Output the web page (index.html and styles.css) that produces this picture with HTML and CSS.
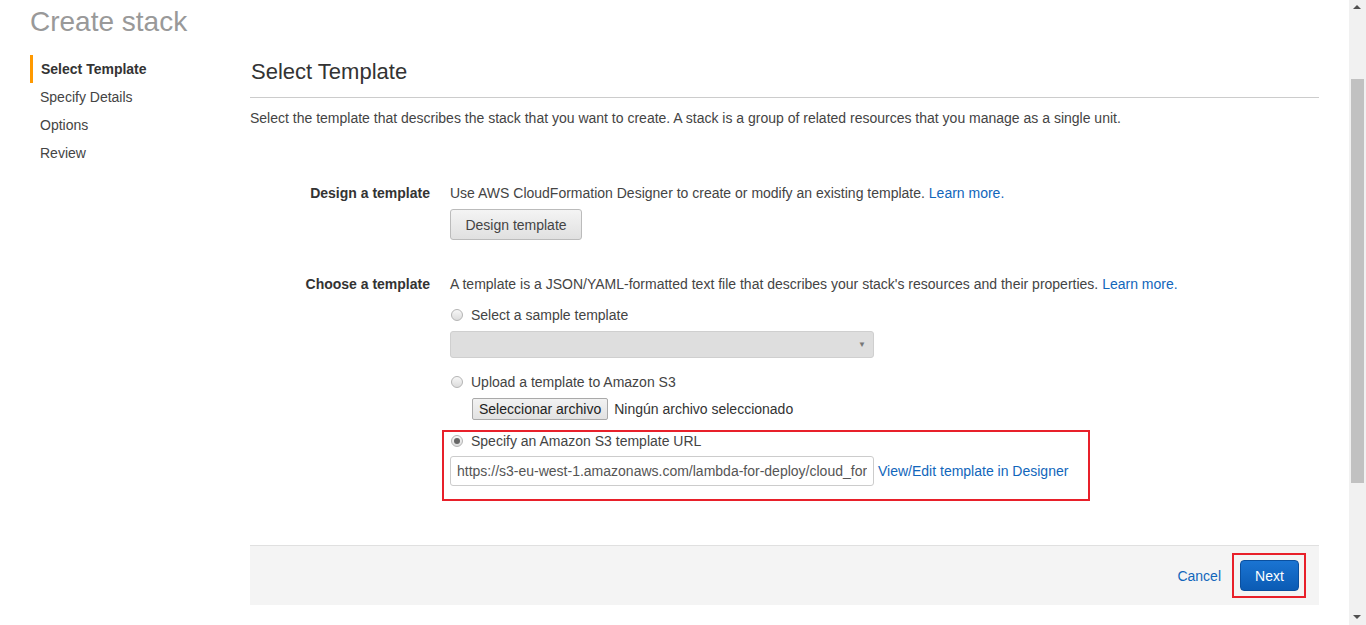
FILE: index.html
```html
<!DOCTYPE html>
<html lang="en">
<head>
<meta charset="utf-8">
<title>Create stack</title>
<link rel="stylesheet" href="styles.css">
</head>
<body>
<div class="viewport">
  <header class="page-header">
    <h1 class="page-title">Create stack</h1>
  </header>
  <div class="layout">
    <nav class="steps">
      <ul class="step-list">
        <li class="step active">Select Template</li>
        <li class="step">Specify Details</li>
        <li class="step">Options</li>
        <li class="step">Review</li>
      </ul>
    </nav>
    <main class="main">
      <h2 class="section-title">Select Template</h2>
      <p class="intro">Select the template that describes the stack that you want to create. A stack is a group of related resources that you manage as a single unit.</p>

      <div class="form-row row-design">
        <div class="row-label">Design a template</div>
        <div class="row-body">
          <div class="line">Use AWS CloudFormation Designer to create or modify an existing template. <a class="link" href="#">Learn more.</a></div>
          <button class="btn-default">Design template</button>
        </div>
      </div>

      <div class="form-row row-choose">
        <div class="row-label">Choose a template</div>
        <div class="row-body">
          <div class="line">A template is a JSON/YAML-formatted text file that describes your stack's resources and their properties. <a class="link" href="#">Learn more.</a></div>
          <div class="line radio-line first-radio"><span class="radio"></span>Select a sample template</div>
          <div class="select-box"><span class="select-arrow">&#9660;</span></div>
          <div class="line radio-line second-radio"><span class="radio"></span>Upload a template to Amazon S3</div>
          <div class="file-line"><button class="btn-file">Seleccionar archivo</button><span class="file-status">Ningún archivo seleccionado</span></div>
          <div class="highlight-box">
            <div class="line radio-line url-radio"><span class="radio checked"></span>Specify an Amazon S3 template URL</div>
            <div class="url-line">
              <input class="url-input" type="text" value="https://s3-eu-west-1.amazonaws.com/lambda-for-deploy/cloud_formation.json" readonly>
              <a class="link designer-link" href="#">View/Edit template in Designer</a>
            </div>
          </div>
        </div>
      </div>

      <footer class="wizard-footer">
        <a class="link cancel" href="#">Cancel</a>
        <div class="next-highlight"><button class="btn-primary">Next</button></div>
      </footer>
    </main>
  </div>
</div>
<div class="scrollbar">
  <span class="sb-arrow sb-up"></span>
  <span class="sb-thumb"></span>
  <span class="sb-arrow sb-down"></span>
</div>
</body>
</html>
```

FILE: styles.css
```css
html, body {
  margin: 0;
  padding: 0;
  background: #ffffff;
  overflow: hidden;
}
body {
  font-family: "Liberation Sans", Arial, sans-serif;
  font-size: 14px;
  color: #444444;
}
.viewport {
  width: 1349px;
  height: 625px;
  overflow: hidden;
}
.page-header {
  height: 55px;
  padding-left: 30px;
  box-sizing: border-box;
  padding-top: 6px;
}
.page-title {
  margin: 0;
  font-size: 28px;
  line-height: 32px;
  font-weight: normal;
  color: #999999;
}
.layout {
  display: flex;
}
.steps {
  width: 250px;
  flex: none;
  padding-left: 30px;
  box-sizing: border-box;
}
.step-list {
  list-style: none;
  margin: 0;
  padding: 0;
}
.step {
  padding: 4px 0 4px 10px;
  line-height: 20px;
  color: #444444;
}
.step.active {
  border-left: 3px solid #f90;
  padding-left: 8px;
  font-weight: bold;
  color: #333333;
}
.main {
  width: 1069px;
  flex: none;
}
.section-title {
  margin: 4px 0 0;
  padding-left: 1px;
  font-size: 22px;
  line-height: 26px;
  font-weight: normal;
  color: #333333;
  padding-bottom: 12px;
  border-bottom: 1px solid #cccccc;
}
.intro {
  margin: 10px 0 0;
  line-height: 20px;
}
.link {
  color: #1166bb;
  text-decoration: none;
}
.form-row {
  display: flex;
  gap: 20px;
}
.row-design {
  margin-top: 55px;
}
.row-choose {
  margin-top: 34px;
}
.row-label {
  width: 180px;
  flex: none;
  text-align: right;
  font-weight: bold;
  color: #333333;
  line-height: 20px;
}
.row-body {
  display: flex;
  flex-direction: column;
  align-items: flex-start;
}
.line {
  line-height: 20px;
  white-space: nowrap;
}
.btn-default {
  margin-top: 6px;
  height: 31px;
  width: 132px;
  padding: 0;
  font-family: inherit;
  font-size: 14px;
  color: #444444;
  background: linear-gradient(#f4f4f4, #e0e0e0);
  border: 1px solid #bbbbbb;
  border-radius: 3px;
}
.radio-line {
  display: flex;
  align-items: center;
}
.first-radio {
  margin-top: 11px;
}
.second-radio {
  margin-top: 14px;
}
.url-radio {
  margin-top: -1px;
}
.radio {
  width: 10px;
  height: 10px;
  border: 1px solid #b4b4b4;
  border-radius: 50%;
  background: linear-gradient(#f7f7f7, #dcdcdc);
  margin: 0 8px 0 1px;
  position: relative;
  flex: none;
}
.radio.checked::after {
  content: "";
  position: absolute;
  left: 2px;
  top: 2px;
  width: 6px;
  height: 6px;
  border-radius: 50%;
  background: #666666;
}
.select-box {
  margin-top: 6px;
  width: 424px;
  height: 27px;
  box-sizing: border-box;
  background: #dedede;
  border: 1px solid #cfcfcf;
  border-radius: 3px;
  display: flex;
  justify-content: flex-end;
  align-items: center;
  padding-right: 7px;
}
.select-arrow {
  font-size: 8px;
  color: #777777;
}
.file-line {
  margin-top: 6px;
  margin-left: 22px;
  display: flex;
  align-items: center;
}
.btn-file {
  height: 22px;
  padding: 0 6px;
  font-family: inherit;
  font-size: 14px;
  color: #222222;
  background: linear-gradient(#f2f2f2, #e2e2e2);
  border: 1px solid #a9a9a9;
  border-radius: 2px;
}
.file-status {
  margin-left: 6px;
  color: #333333;
}
.highlight-box {
  margin-top: 10px;
  margin-left: -8px;
  width: 648px;
  box-sizing: border-box;
  border: 2px solid #e8202a;
  padding: 0 0 13px 6px;
}
.url-line {
  margin-top: 5px;
  display: flex;
  align-items: center;
}
.url-input {
  width: 424px;
  height: 30px;
  box-sizing: border-box;
  padding: 0 6px;
  font-family: inherit;
  font-size: 14px;
  color: #555555;
  border: 1px solid #cccccc;
  border-radius: 3px;
  background: #ffffff;
  outline: none;
}
.designer-link {
  margin-left: 4px;
}
.wizard-footer {
  margin-top: 44px;
  height: 60px;
  box-sizing: border-box;
  background: #f4f4f4;
  border-top: 1px solid #e0e0e0;
  display: flex;
  justify-content: flex-end;
  align-items: center;
  padding-right: 13px;
}
.cancel {
  margin-right: 11px;
}
.next-highlight {
  border: 2px solid #e8202a;
  padding: 5px 5px 5px 6px;
  display: flex;
}
.btn-primary {
  width: 59px;
  height: 31px;
  font-family: inherit;
  font-size: 14px;
  color: #ffffff;
  background: linear-gradient(#1a74d2, #0b5bb4);
  border: 1px solid #0a4f9e;
  border-radius: 4px;
  padding: 0;
}
.scrollbar {
  position: fixed;
  top: 0;
  right: 0;
  width: 17px;
  height: 625px;
  background: #f1f1f1;
}
.sb-thumb {
  position: absolute;
  left: 2px;
  top: 79px;
  width: 13px;
  height: 404px;
  background: #c1c1c1;
}
.sb-arrow {
  position: absolute;
  left: 4px;
  width: 0;
  height: 0;
  border-left: 4px solid transparent;
  border-right: 4px solid transparent;
}
.sb-up {
  top: 5px;
  border-bottom: 4px solid #505050;
}
.sb-down {
  bottom: 6px;
  border-top: 4px solid #505050;
}
```
